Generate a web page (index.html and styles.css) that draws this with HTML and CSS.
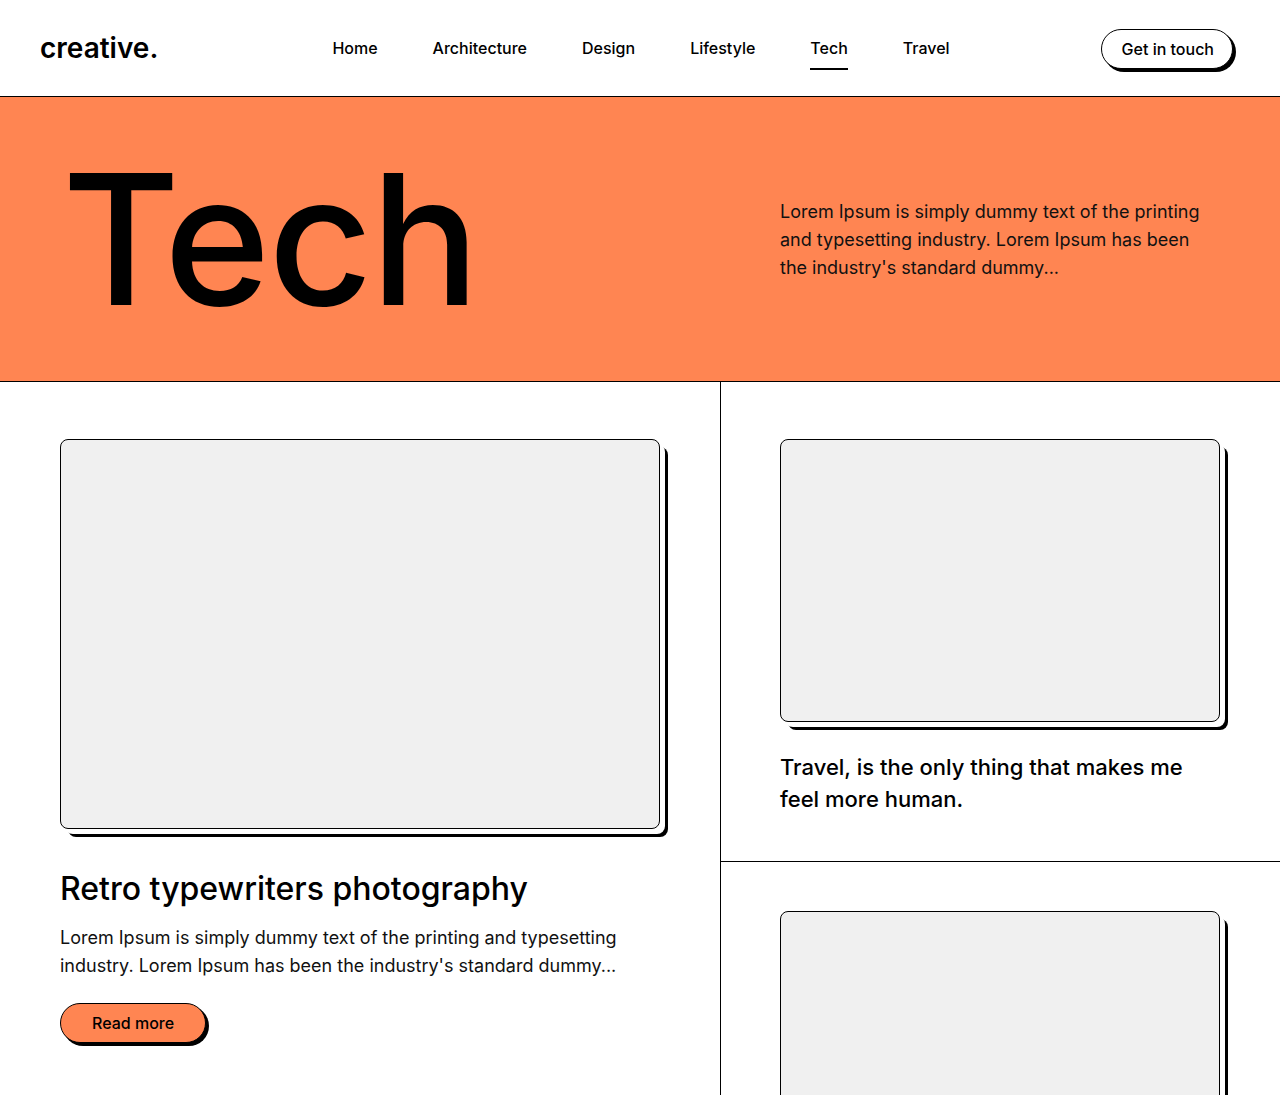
FILE: index.html
```html
<!DOCTYPE html>
<html lang="en">
<head>
<meta charset="utf-8">
<title>creative. — Tech</title>
<link rel="stylesheet" href="styles.css">
</head>
<body>
<header class="site-header">
  <a class="logo" href="#">creative.</a>
  <nav class="nav">
    <a href="#" class="nav-link">Home</a>
    <a href="#" class="nav-link">Architecture</a>
    <a href="#" class="nav-link">Design</a>
    <a href="#" class="nav-link">Lifestyle</a>
    <a href="#" class="nav-link active">Tech</a>
    <a href="#" class="nav-link">Travel</a>
  </nav>
  <div class="header-action">
    <a href="#" class="btn btn-outline">Get in touch</a>
  </div>
</header>

<section class="hero">
  <div class="hero-left">
    <h1 class="hero-title">Tech</h1>
  </div>
  <div class="hero-right">
    <p class="hero-text">Lorem Ipsum is simply dummy text of the printing and typesetting industry. Lorem Ipsum has been the industry's standard dummy...</p>
  </div>
</section>

<main class="posts">
  <article class="post-main">
    <div class="thumb thumb-large"></div>
    <h2 class="post-title">Retro typewriters photography</h2>
    <p class="post-text">Lorem Ipsum is simply dummy text of the printing and typesetting industry. Lorem Ipsum has been the industry's standard dummy...</p>
    <a href="#" class="btn btn-orange">Read more</a>
  </article>
  <div class="post-side">
    <article class="side-card side-card-first">
      <div class="thumb thumb-small"></div>
      <h3 class="side-title">Travel, is the only thing that makes me feel more human.</h3>
    </article>
    <article class="side-card side-card-second">
      <div class="thumb thumb-small"></div>
    </article>
  </div>
</main>
</body>
</html>
```

FILE: styles.css
```css
* { box-sizing: border-box; }

html, body {
  margin: 0;
  padding: 0;
}

body {
  font-family: "Inter", "Liberation Sans", sans-serif;
  color: #000;
  background: #fff;
  overflow: hidden;
}

a { color: inherit; text-decoration: none; }

.site-header {
  height: 97px;
  display: grid;
  grid-template-columns: 1fr auto 1fr;
  align-items: center;
  padding: 0 40px 1px;
  border-bottom: 1px solid #000;
}

.logo {
  font-size: 28px;
  font-weight: 600;
  justify-self: start;
  line-height: 1;
}

.nav {
  display: flex;
  gap: 55px;
  font-size: 16px;
  font-weight: 500;
  margin-left: 2px;
}

.nav-link {
  position: relative;
  line-height: 20px;
}

.nav-link.active::after {
  content: "";
  position: absolute;
  left: 0;
  right: 0;
  bottom: -12px;
  height: 2px;
  background: #000;
}

.header-action {
  justify-self: end;
  padding-right: 7px;
}

.btn {
  display: inline-flex;
  align-items: center;
  justify-content: center;
  height: 40px;
  border: 1px solid #000;
  border-radius: 999px;
  font-size: 16px;
  font-weight: 500;
  box-shadow: 3px 3px 0 #000;
}

.btn-outline {
  padding: 0 18px 0 20px;
  background: #fff;
  margin-top: 2px;
}

.btn-orange {
  padding: 0 31px;
  background: #ff8552;
}

.hero {
  height: 285px;
  background: #ff8552;
  border-bottom: 1px solid #000;
  display: grid;
  grid-template-columns: 720px 1fr;
  align-items: center;
}

.hero-left {
  padding-left: 62px;
}

.hero-title {
  margin: 0;
  font-size: 181px;
  font-weight: 500;
  line-height: 1;
  letter-spacing: -2px;
}

.hero-right {
  padding: 2px 60px 0;
}

.hero-text {
  margin: 0;
  font-size: 18px;
  line-height: 28px;
  color: #111;
}

.posts {
  display: grid;
  grid-template-columns: 721px 1fr;
}

.post-main {
  padding: 57px 60px 40px;
  border-right: 1px solid #000;
}

.thumb {
  background: #f0f0f0;
  border: 1px solid #000;
  border-radius: 8px;
  box-shadow: 5px 5px 0 #fff, 8px 8px 0 #000;
}

.thumb-large {
  width: 600px;
  height: 390px;
}

.thumb-small {
  width: 440px;
  height: 283px;
}

.post-title {
  margin: 40px 0 0;
  font-size: 32px;
  font-weight: 500;
  line-height: 40px;
}

.post-text {
  margin: 15px 0 0;
  font-size: 18px;
  line-height: 28px;
  color: #111;
}

.post-main .btn-orange {
  margin-top: 23px;
}

.side-card {
  padding: 0 60px 0 59px;
}

.side-card-first {
  padding-top: 57px;
  padding-bottom: 46px;
  border-bottom: 1px solid #000;
}

.side-card-second {
  padding-top: 49px;
}

.side-title {
  margin: 29px 0 0;
  font-size: 22px;
  font-weight: 500;
  line-height: 32px;
}
```
